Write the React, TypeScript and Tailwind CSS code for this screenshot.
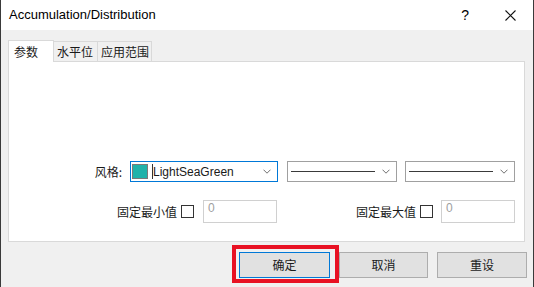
import React from 'react'

const latin = { fontFamily: '"Liberation Sans", "Noto Sans CJK SC", sans-serif' }
const cjk = { fontFamily: '"Noto Sans CJK SC", "Liberation Sans", sans-serif' }

function Chevron() {
    return (
        <svg width="8" height="5" viewBox="0 0 8 5" className="shrink-0">
            <polyline points="0.5,0.7 4,4.2 7.5,0.7" fill="none" stroke="#707070" strokeWidth="1" />
        </svg>
    )
}

function LineCombo() {
    return (
        <div className="w-[110px] h-[21px] border border-[#a0a0a0] bg-white flex items-center pl-[3px] pr-[6px]">
            <div className="w-[84px] h-px bg-[#3a3a3a]" />
            <div className="ml-auto"><Chevron /></div>
        </div>
    )
}

function Checkbox() {
    return <div className="w-[13px] h-[13px] border border-[#333] bg-white shrink-0" />
}

function NumInput() {
    return (
        <div style={latin} className="w-[74px] h-[23px] border border-[#d0d0d0] bg-white text-[12px] text-[#a0a0a0] pl-[4px] leading-[14px]">
            0
        </div>
    )
}

export default function App() {
    return (
        <div style={cjk} className="w-[534px] h-[287px] bg-[#f0f0f0] border-l border-r border-[#3a3a3a] flex flex-col text-[#1a1a1a] overflow-hidden">
            {/* title bar */}
            <div className="h-[30px] bg-white flex items-center pl-[8px] shrink-0">
                <span style={latin} className="text-[13px] text-black">Accumulation/Distribution</span>
                <span style={latin} className="ml-auto text-[14px] text-black">?</span>
                <svg width="11" height="11" viewBox="0 0 11 11" className="ml-[36px] mr-[17px]">
                    <path d="M0.5 0.5 L10.5 10.5 M10.5 0.5 L0.5 10.5" stroke="#111" strokeWidth="1.1" />
                </svg>
            </div>

            {/* tabs + panel */}
            <div className="pl-[7px] pr-[8px] pt-[9px] flex flex-col">
                <div className="flex items-end h-[22px] text-[12px] leading-none">
                    <div className="h-[22px] w-[46px] bg-white border border-b-0 border-[#d9d9d9] pl-[5px] pt-[5px] relative z-10 -mb-px">参数</div>
                    <div className="h-[20px] w-[44px] pl-[3px] border-t border-r border-[#d9d9d9] flex items-center">水平位</div>
                    <div className="h-[20px] w-[54px] pl-[3px] border-t border-r border-[#d9d9d9] flex items-center">应用范围</div>
                </div>
                <div className="h-[181px] bg-white border border-[#d9d9d9] flex flex-col justify-end pb-[18px] text-[12px]">
                    <div className="flex items-center pr-[9px]">
                        <span className="w-[113px] text-right mr-[8px]">风格:</span>
                        <div className="w-[148px] h-[21px] border border-[#0078d7] bg-white flex items-center pl-[1px] pr-[6px]">
                            <div className="w-[16px] h-[15px] bg-[#20b2aa] border border-[#7a7a7a]" />
                            <div className="w-px h-[15px] bg-[#333] ml-[4px]" />
                            <span style={latin} className="text-[12px] leading-none">LightSeaGreen</span>
                            <div className="ml-auto"><Chevron /></div>
                        </div>
                        <div className="ml-[9px]"><LineCombo /></div>
                        <div className="ml-auto"><LineCombo /></div>
                    </div>
                    <div className="flex items-center mt-[18px] pr-[9px]">
                        <div className="w-[268px] flex items-center justify-end">
                            <span>固定最小值</span>
                            <div className="ml-[4px] mr-[9px]"><Checkbox /></div>
                            <NumInput />
                        </div>
                        <div className="flex-1 flex items-center justify-end">
                            <span>固定最大值</span>
                            <div className="ml-[4px] mr-[8px]"><Checkbox /></div>
                            <NumInput />
                        </div>
                    </div>
                </div>
            </div>

            {/* buttons */}
            <div className="flex items-start justify-end pr-[6px] mt-[3px] text-[12px]">
                <div className="border-[4px] border-[#e81123] pl-[3px] pr-[5px] pt-[3px] pb-[1px]">
                    <button className="w-[91px] h-[26px] bg-[#e1e1e1] border border-[#0078d7] block">确定</button>
                </div>
                <button className="w-[89px] h-[26px] bg-[#e1e1e1] border border-[#adadad] mt-[7px]">取消</button>
                <button className="w-[90px] h-[26px] bg-[#e1e1e1] border border-[#adadad] ml-[9px] mt-[7px]">重设</button>
            </div>
        </div>
    )
}
